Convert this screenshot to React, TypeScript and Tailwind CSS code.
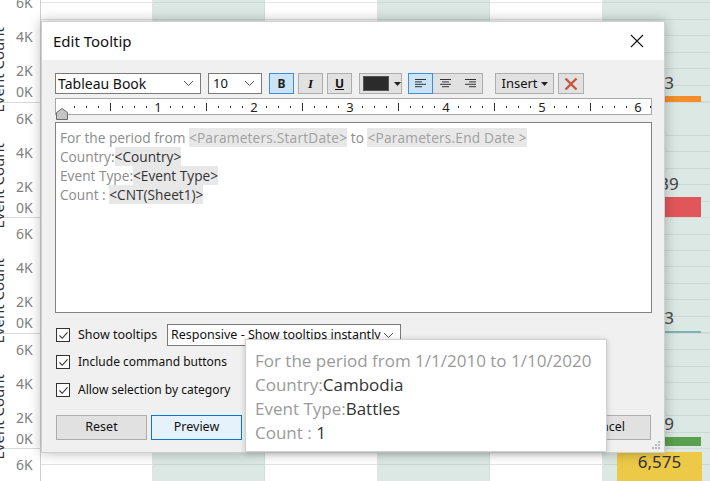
import React from 'react';

const uiFont = "font-['Noto_Sans','DejaVu_Sans',sans-serif]";
const tabFont = "font-['Open_Sans','Noto_Sans',sans-serif]";

const grid =
  'bg-[repeating-linear-gradient(to_bottom,transparent_0px,transparent_15.5px,#e4e4e4_15.5px,#e4e4e4_16.5px)]';
const gridTeal =
  'bg-[repeating-linear-gradient(to_bottom,transparent_0px,transparent_15.5px,#c9d9d4_15.5px,#c9d9d4_16.5px)]';

type PaneData = { label?: string; bar?: string; cell?: string };

const panes: PaneData[] = [
  { label: '3', bar: 'h-[6px] bg-[#f28e2b]' },
  { label: '39', bar: 'h-[20px] bg-[#e15759]' },
  { label: '3', bar: 'h-[2px] bg-[#76b7b2]' },
  { label: '9', bar: 'h-[9px] mb-[2px] bg-[#59a14f]' },
  { cell: '6,575' },
];

function Pane({ data }: { data: PaneData }) {
  return (
    <div className="flex h-[115.5px] shrink-0 border-b border-[#d9d9d9]">
      {/* axis */}
      <div className="flex w-[41px] shrink-0 border-r border-[#cfcfcf]">
        <div className="flex w-[14px] justify-end overflow-x-clip pt-[40px]">
          <span className="mr-[5px] h-fit shrink-0 rotate-180 whitespace-nowrap text-[15px] leading-[22px] text-[#333] [writing-mode:vertical-rl]">
            Event Count
          </span>
        </div>
        <div className="flex flex-1 flex-col pl-[2px] text-[14px] leading-[14px] text-[#808080]">
          <span className="mt-[9px]">6K</span>
          <span className="mt-[20px]">4K</span>
          <span className="mt-[20px]">2K</span>
          <span className="mt-[7px]">0K</span>
        </div>
      </div>
      {/* chart columns */}
      <div className={`w-[112px] border-r border-[#e3e3e3] ${grid}`} />
      <div className={`w-[112px] border-r border-[#d3dedb] bg-[#dce8e4] ${gridTeal}`} />
      <div className={`w-[113px] border-r border-[#e3e3e3] ${grid}`} />
      <div className={`w-[112px] border-r border-[#d3dedb] bg-[#dce8e4] ${gridTeal}`} />
      <div className={`w-[113px] border-r border-[#e3e3e3] ${grid}`} />
      <div className={`flex flex-1 flex-col bg-[#dce8e4] ${gridTeal}`}>
        {data.cell ? (
          <div className="ml-[14px] mr-[8px] mt-[3px] flex h-[40px] justify-center bg-[#edc948] text-[17px] leading-[20px] text-[#333]">
            {data.cell}
          </div>
        ) : (
          <div className="ml-[34px] mr-[9px] flex flex-1 flex-col justify-end">
            <span className="mb-[4px] text-center text-[17px] leading-[18px] text-[#444]">{data.label}</span>
            <div className={data.bar} />
          </div>
        )}
      </div>
    </div>
  );
}

function Chevron() {
  return (
    <svg width="11" height="7" viewBox="0 0 11 7" className="shrink-0">
      <polyline points="1,1 5.5,5.5 10,1" fill="none" stroke="#555" strokeWidth="1" />
    </svg>
  );
}

function AlignIcon({ mode }: { mode: 'left' | 'center' | 'right' }) {
  const long = 11;
  const short = 7;
  const xs = (w: number) => (mode === 'left' ? 0 : mode === 'center' ? (long - w) / 2 : long - w);
  const widths = [long, short, long, short];
  return (
    <svg width="11" height="9" viewBox="0 0 11 9">
      {widths.map((w, i) => (
        <rect key={i} x={xs(w)} y={i * 2.4} width={w} height="1" fill="#333" />
      ))}
    </svg>
  );
}

function Check() {
  return (
    <span className="flex h-[14px] w-[14px] shrink-0 items-center justify-center border border-[#333] bg-white">
      <svg width="11" height="11" viewBox="0 0 11 11">
        <polyline points="1.5,5.5 4.2,8.3 9.5,2.3" fill="none" stroke="#333" strokeWidth="1.1" />
      </svg>
    </span>
  );
}

function Ruler() {
  const ticks = [];
  for (let i = 1; i <= 49; i++) {
    const x = 6 + i * 12;
    if (i % 8 === 0) {
      ticks.push(
        <text key={i} x={x} y="12.5" textAnchor="middle" fontSize="13" fill="#222" fontFamily="Noto Sans, sans-serif">
          {i / 8}
        </text>
      );
    } else if (i % 4 === 0) {
      ticks.push(<rect key={i} x={x} y="4" width="1" height="8" fill="#333" />);
    } else {
      ticks.push(<rect key={i} x={x} y="7" width="1" height="2" fill="#333" />);
    }
  }
  return (
    <div className="relative mt-[4px] h-[17px] w-[597px] border border-[#a8a8a8] bg-white">
      <svg width="595" height="15" viewBox="0 0 595 15" className="block">
        {ticks}
      </svg>
      <svg width="12" height="12" viewBox="0 0 12 12" className="absolute left-[0px] top-[9px]">
        <polygon points="6,0.5 11.5,4.5 11.5,11.5 0.5,11.5 0.5,4.5" fill="#c4c4c4" stroke="#6b6b6b" strokeWidth="1" />
      </svg>
    </div>
  );
}

function Token({ children, dark }: { children: React.ReactNode; dark?: boolean }) {
  return (
    <span className={`bg-[#e8e8e8] ${dark ? 'text-[#333]' : 'tracking-[0.2px] text-[#a0a0a0]'}`}>{children}</span>
  );
}

const btn = 'flex items-center justify-center border border-[#adadad] bg-[#e1e1e1]';

export default function App() {
  return (
    <div className={`relative h-[481px] w-[710px] overflow-hidden bg-white ${uiFont}`}>
      {/* worksheet behind */}
      <div className="-mt-[13px] flex flex-col">
        {panes.map((p, i) => (
          <Pane key={i} data={p} />
        ))}
      </div>

      {/* Edit Tooltip dialog */}
      <div className="absolute left-[41px] top-[21px] flex h-[432px] w-[624px] flex-col border border-[#cfcfcf] bg-[#f0f0f0] shadow-[0_0_12px_rgba(0,0,0,0.28)]">
        <div className="flex h-[38px] shrink-0 items-center justify-between bg-white pl-[11px] pr-[20px]">
          <span className="text-[15px] text-[#111]">Edit Tooltip</span>
          <svg width="14" height="14" viewBox="0 0 14 14">
            <path d="M1 1 L13 13 M13 1 L1 13" stroke="#111" strokeWidth="1.1" />
          </svg>
        </div>

        <div className="relative flex flex-1 flex-col pl-[13px] pt-[13px] text-[12px] text-[#111]">
          {/* toolbar */}
          <div className="flex h-[21px] items-stretch">
            <div className="flex w-[146px] items-center justify-between border border-[#7a7a7a] bg-white pl-[2px] pr-[6px]">
              <span className="text-[14px]">Tableau Book</span>
              <Chevron />
            </div>
            <div className="ml-[7px] flex w-[54px] items-center justify-between border border-[#7a7a7a] bg-white pl-[4px] pr-[6px]">
              <span className="text-[13px]">10</span>
              <Chevron />
            </div>
            <div className="ml-[7px] flex w-[25px] items-center justify-center border border-[#3d8ee0] bg-[#cce4f7] text-[12px] font-bold text-[#222]">
              B
            </div>
            <div className={`ml-[4px] w-[25px] ${btn} font-['Liberation_Serif',serif] text-[13px] font-bold italic`}>I</div>
            <div className={`ml-[4px] w-[25px] ${btn} text-[12px] font-bold underline`}>U</div>
            <div className={`ml-[7px] w-[43px] ${btn} justify-start pl-[3px]`}>
              <span className="h-[15px] w-[26px] border border-[#555] bg-[#2b2b2b]" />
              <svg width="7" height="4" viewBox="0 0 7 4" className="ml-[5px]">
                <polygon points="0,0 7,0 3.5,4" fill="#222" />
              </svg>
            </div>
            <div className="ml-[6px] flex w-[75px] border border-[#adadad] bg-[#e1e1e1]">
              <div className="-m-[1px] mr-0 flex w-[25px] items-center justify-center border border-[#3d8ee0] bg-[#cce4f7]">
                <AlignIcon mode="left" />
              </div>
              <div className="flex w-[25px] items-center justify-center">
                <AlignIcon mode="center" />
              </div>
              <div className="flex w-[24px] items-center justify-center">
                <AlignIcon mode="right" />
              </div>
            </div>
            <div className={`ml-[12px] w-[59px] ${btn} gap-[3px] text-[13px]`}>
              <span>Insert</span>
              <svg width="7" height="4" viewBox="0 0 7 4">
                <polygon points="0,0 7,0 3.5,4" fill="#222" />
              </svg>
            </div>
            <div className={`ml-[4px] w-[26px] ${btn}`}>
              <svg width="14" height="14" viewBox="0 0 14 14">
                <path d="M1.5 1.5 L12.5 12.5 M12.5 1.5 L1.5 12.5" stroke="#c8553d" strokeWidth="2.4" />
              </svg>
            </div>
          </div>

          <Ruler />

          {/* editor */}
          <div
            className={`mt-[7px] h-[191px] w-[597px] border border-[#828282] bg-white px-[4px] pt-[5px] text-[13.7px] leading-[19px] text-[#8c8c8c] ${tabFont}`}
          >
            <div className="whitespace-nowrap">
              For the period from <Token>&lt;Parameters.StartDate&gt;</Token> to{' '}
              <Token>&lt;Parameters.End Date &gt;</Token>
            </div>
            <div>
              Country:<Token dark>&lt;Country&gt;</Token>
            </div>
            <div>
              Event Type:<Token dark>&lt;Event Type&gt;</Token>
            </div>
            <div>
              Count : <Token dark>&lt;CNT(Sheet1)&gt;</Token>
            </div>
          </div>

          {/* options */}
          <div className="mt-[11px] flex h-[22px] items-center text-[12.5px]">
            <div className="flex w-[112px] items-center gap-[8px] pl-[1px]">
              <Check />
              <span>Show tooltips</span>
            </div>
            <div className="flex h-[22px] w-[234px] items-center justify-between border border-[#7a7a7a] bg-white pl-[3px] pr-[6px]">
              <span className="whitespace-nowrap">Responsive - Show tooltips instantly</span>
              <Chevron />
            </div>
          </div>
          <div className="mt-[5px] flex h-[22px] items-center gap-[8px] pl-[1px]">
            <Check />
            <span>Include command buttons</span>
          </div>
          <div className="mt-[6px] flex h-[22px] items-center gap-[8px] pl-[1px]">
            <Check />
            <span>Allow selection by category</span>
          </div>

          {/* buttons */}
          <div className="mt-[14px] flex h-[25px] pl-[1px] pr-[13px] text-[12.5px]">
            <div className={`w-[91px] ${btn}`}>Reset</div>
            <div className="ml-[4px] flex w-[91px] items-center justify-center border border-[#0078d7] bg-[#e5f1fb]">
              Preview
            </div>
            <div className={`ml-auto w-[91px] ${btn}`}>OK</div>
            <div className={`ml-[4px] w-[91px] ${btn}`}>Cancel</div>
          </div>

          {/* size grip */}
          <svg width="10" height="10" viewBox="0 0 10 10" className="absolute bottom-[1px] right-[4px]">
            {[
              [8, 0],
              [8, 3],
              [5, 3],
              [8, 6],
              [5, 6],
              [2, 6],
            ].map(([x, y], i) => (
              <rect key={i} x={x} y={y} width="2" height="2" fill="#b8b8b8" />
            ))}
          </svg>
        </div>
      </div>

      {/* tooltip preview */}
      <div
        className={`absolute left-[245px] top-[339px] h-[113px] w-[362px] border border-[#d0d0d0] bg-white pl-[9px] pt-[9px] text-[17px] leading-[24px] text-[#9a9a9a] shadow-[0_1px_6px_rgba(0,0,0,0.2)] ${tabFont}`}
      >
        <div className="whitespace-nowrap">For the period from 1/1/2010 to 1/10/2020</div>
        <div>
          Country:<span className="text-[#333]">Cambodia</span>
        </div>
        <div>
          Event Type:<span className="text-[#333]">Battles</span>
        </div>
        <div>
          Count : <span className="text-[#333]">1</span>
        </div>
      </div>
    </div>
  );
}
